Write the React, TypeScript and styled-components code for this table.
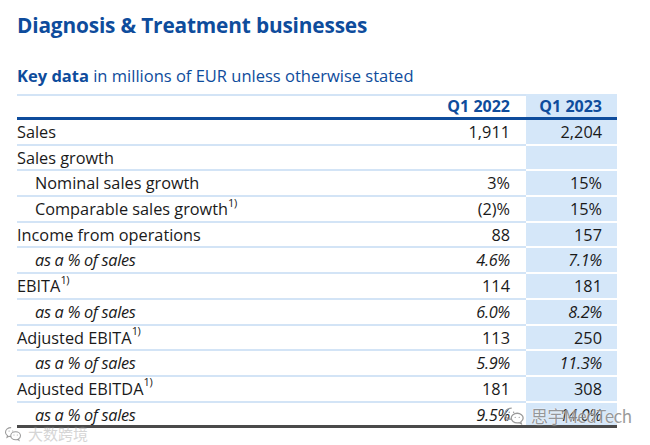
import React from 'react';
import styled, { createGlobalStyle } from 'styled-components';

const GlobalStyle = createGlobalStyle`
  html, body {
    margin: 0;
    padding: 0;
    background: #ffffff;
  }
  body {
    font-family: "Open Sans", "Noto Sans", "Noto Sans CJK SC", sans-serif;
    color: #1a1a1a;
  }
`;

const BLUE = '#0e4c9c';
const LIGHT = '#d3e4f6';
const HIGHLIGHT = '#d5e7f9';

const Page = styled.div`
  position: relative;
  width: 650px;
  height: 445px;
  box-sizing: border-box;
  padding: 10px 33px 0 17px;
  overflow: hidden;
`;

const Title = styled.h1`
  margin: 0;
  font-size: 20.8px;
  line-height: 30px;
  font-weight: 700;
  color: ${BLUE};
  letter-spacing: -0.15px;
`;

const Subtitle = styled.p`
  margin: 24px 0 0;
  font-size: 16.5px;
  line-height: 24px;
  color: ${BLUE};
  b {
    font-weight: 700;
  }
`;

const Table = styled.div`
  display: grid;
  grid-template-columns: 1fr 109px 91px;
  width: 600px;
  margin-top: 6px;
`;

const HeadCell = styled.div<{ $hl?: boolean }>`
  height: 21px;
  line-height: 21px;
  padding-right: ${(p) => (p.$hl ? '15px' : '16px')};
  text-align: right;
  font-size: 16px;
  font-weight: 700;
  color: ${BLUE};
  background: ${(p) => (p.$hl ? HIGHLIGHT : 'transparent')};
  border-top: 2px solid ${(p) => (p.$hl ? HIGHLIGHT : LIGHT)};
  border-bottom: 3px solid ${BLUE};
`;

const Cell = styled.div<{
  $hl?: boolean;
  $label?: boolean;
  $indent?: boolean;
  $italic?: boolean;
  $last?: boolean;
}>`
  box-sizing: border-box;
  height: 25.7px;
  padding-top: 1px;
  line-height: 23px;
  font-size: 16.3px;
  white-space: nowrap;
  font-style: ${(p) => (p.$italic ? 'italic' : 'normal')};
  letter-spacing: ${(p) => (p.$italic ? '-0.3px' : '0')};
  text-align: ${(p) => (p.$label ? 'left' : 'right')};
  padding-left: ${(p) => (p.$indent ? '18px' : '0')};
  padding-right: ${(p) => (p.$label ? '0' : p.$hl ? '15px' : '16px')};
  background: ${(p) => (p.$hl ? HIGHLIGHT : 'transparent')};
  border-bottom: ${(p) =>
    p.$last ? '3px solid #4a4a4a' : `2px solid ${p.$hl ? '#ffffff' : LIGHT}`};
`;

const Sup = styled.sup`
  font-size: 11px;
  line-height: 0;
  position: relative;
  top: -2px;
  letter-spacing: -0.3px;
`;

const Watermark = styled.div`
  position: absolute;
  display: flex;
  align-items: center;
  gap: 6px;
  color: #8a8a8a;
  font-family: "Noto Sans CJK SC", "Noto Sans", sans-serif;
  pointer-events: none;
`;

const MarkText = styled.span<{ $faint?: boolean }>`
  font-size: ${(p) => (p.$faint ? '15px' : '17px')};
  opacity: ${(p) => (p.$faint ? 0.35 : 0.85)};
  text-shadow: 0 0 2px #ffffff, 0 0 1px #ffffff;
  letter-spacing: ${(p) => (p.$faint ? '0' : '-0.5px')};
`;

type Row = {
  label: string;
  a: string;
  b: string;
  sup?: boolean;
  indent?: boolean;
  italic?: boolean;
};

const rows: Row[] = [
  { label: 'Sales', a: '1,911', b: '2,204' },
  { label: 'Sales growth', a: '', b: '' },
  { label: 'Nominal sales growth', a: '3%', b: '15%', indent: true },
  { label: 'Comparable sales growth', a: '(2)%', b: '15%', indent: true, sup: true },
  { label: 'Income from operations', a: '88', b: '157' },
  { label: 'as a % of sales', a: '4.6%', b: '7.1%', indent: true, italic: true },
  { label: 'EBITA', a: '114', b: '181', sup: true },
  { label: 'as a % of sales', a: '6.0%', b: '8.2%', indent: true, italic: true },
  { label: 'Adjusted EBITA', a: '113', b: '250', sup: true },
  { label: 'as a % of sales', a: '5.9%', b: '11.3%', indent: true, italic: true },
  { label: 'Adjusted EBITDA', a: '181', b: '308', sup: true },
  { label: 'as a % of sales', a: '9.5%', b: '14.0%', indent: true, italic: true },
];

const WeChatIcon = ({ size = 22 }: { size?: number }) => (
  <svg width={size} height={size} viewBox="0 0 24 24" fill="none" stroke="#9a9a9a" strokeWidth="1.4">
    <path d="M9.5 3.5c-4.2 0-7.5 2.7-7.5 6.1 0 1.9 1 3.6 2.7 4.7l-.7 2.2 2.6-1.4c.9.3 1.9.5 2.9.5" />
    <path d="M15.5 9c-3.6 0-6.5 2.4-6.5 5.3s2.9 5.3 6.5 5.3c.8 0 1.6-.1 2.3-.4l2.2 1.2-.6-1.9c1.6-1 2.6-2.5 2.6-4.2 0-2.9-2.9-5.3-6.5-5.3z" />
    <circle cx="6.8" cy="8" r="0.8" fill="#9a9a9a" stroke="none" />
    <circle cx="11.6" cy="8" r="0.8" fill="#9a9a9a" stroke="none" />
    <circle cx="13.3" cy="13.4" r="0.7" fill="#9a9a9a" stroke="none" />
    <circle cx="17.7" cy="13.4" r="0.7" fill="#9a9a9a" stroke="none" />
  </svg>
);

export default function App() {
  return (
    <>
      <GlobalStyle />
      <Page>
        <Title>Diagnosis &amp; Treatment businesses</Title>
        <Subtitle>
          <b>Key data</b> in millions of EUR unless otherwise stated
        </Subtitle>
        <Table>
          <HeadCell />
          <HeadCell>Q1 2022</HeadCell>
          <HeadCell $hl>Q1 2023</HeadCell>
          {rows.map((r, i) => {
            const last = i === rows.length - 1;
            return (
              <React.Fragment key={i}>
                <Cell $label $indent={r.indent} $italic={r.italic} $last={last}>
                  {r.label}
                  {r.sup && <Sup>1)</Sup>}
                </Cell>
                <Cell $italic={r.italic} $last={last}>
                  {r.a}
                </Cell>
                <Cell $hl $italic={r.italic} $last={last}>
                  {r.b}
                </Cell>
              </React.Fragment>
            );
          })}
        </Table>
        <Watermark style={{ left: 503, top: 403 }}>
          <WeChatIcon />
          <MarkText>思宇MedTech</MarkText>
        </Watermark>
        <Watermark style={{ left: 4, top: 423 }}>
          <WeChatIcon size={18} />
          <MarkText $faint>大数跨境</MarkText>
        </Watermark>
      </Page>
    </>
  );
}
